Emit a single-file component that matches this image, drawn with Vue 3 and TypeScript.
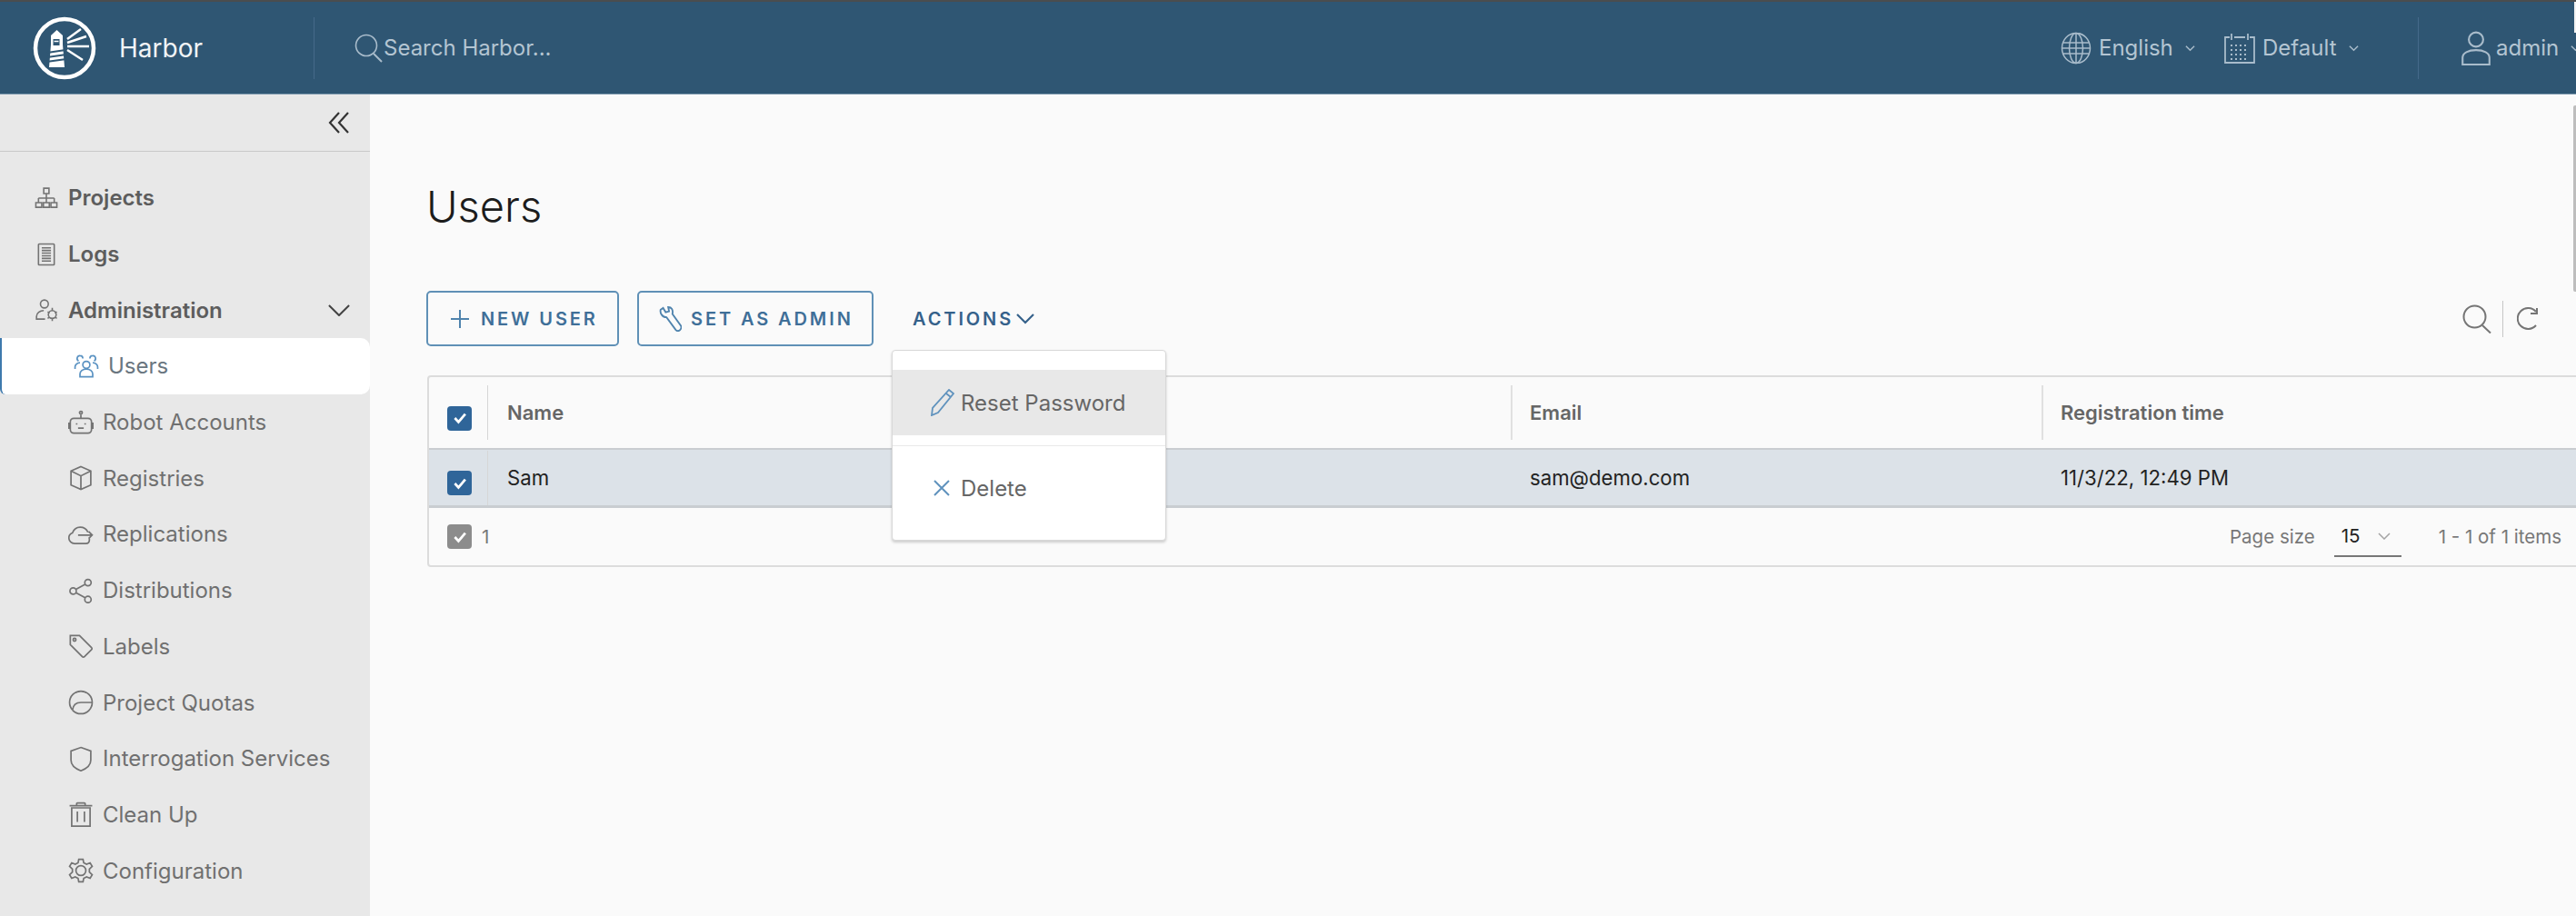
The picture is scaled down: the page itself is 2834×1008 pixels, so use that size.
<script setup lang="ts">
interface NavItem {
  label: string
  icon: string
  top?: boolean
  active?: boolean
  chevron?: boolean
}

const icons: Record<string, string> = {
  projects:
    'M14 3h8v8h-8z M18 11v7 M6 18h24 M6 18v7 M30 18v7 M18 18v7 M2 25h9v7H2z M13.500 25h9v7h-9z M25 25h9v7h-9z',
  logs: 'M7 2h22a1 1 0 0 1 1 1v30a1 1 0 0 1-1 1H7a1 1 0 0 1-1-1V3a1 1 0 0 1 1-1z M11 8h14 M11 12h14 M11 16h14 M11 20h14 M11 24h14 M11 28h14',
  admin:
    'M15 3a6 6 0 1 1 0 12 6 6 0 0 1 0-12z M14 19C8 19 3 23 3 28v4h13 M27 19a6 6 0 1 1 0 12 6 6 0 0 1 0-12z M27 15v4 M27 31v4 M20 21l3 2 M31 29l3 2 M34 21l-3 2 M23 29l-3 2',
  users:
    'M18 11a5 5 0 1 1 0 10 5 5 0 0 1 0-10z M9 33v-4c0-4 4-7 9-7s9 3 9 7v4z M9 3a4 4 0 0 1 4 4 M9 3a4 4 0 0 0-2 7.500 M27 3a4 4 0 0 0-4 4 M27 3a4 4 0 0 1 2 7.500 M2 22v-3c0-3 3-6 7-6 M34 22v-3c0-3-3-6-7-6',
  robot:
    'M8 12h20a5 5 0 0 1 5 5v11a5 5 0 0 1-5 5H8a5 5 0 0 1-5-5V17a5 5 0 0 1 5-5z M18 12V6 M18 2a2 2 0 1 1 0 4 2 2 0 0 1 0-4z M3 19H1v7h2 M33 19h2v7h-2 M12 19v2 M24 19v2 M14 26h8',
  box: 'M18 2l14 6v20l-14 6-14-6V8z M4 8l14 7 14-7 M18 15v19',
  cloud:
    'M30 24v2c0 3-2 5-5 5H9c-4 0-8-3-8-8 0-3 2-6 5-7 2-5 6-8 11-8 5 0 9 3 11 7 M14 19h20 M29 14l5 5-5 5',
  share:
    'M28 2a4 4 0 1 1 0 9 4 4 0 0 1 0-9z M7 14a4 4 0 1 1 0 9 4 4 0 0 1 0-9z M28 26a4 4 0 1 1 0 9 4 4 0 0 1 0-9z M11 16l13-7 M11 21l13 7',
  tag: 'M3 3h13l17 17a2 2 0 0 1 0 3L23 33a2 2 0 0 1-3 0L3 16z M9 7a2 2 0 1 1 0 4 2 2 0 0 1 0-4z',
  quota:
    'M18 2a16 16 0 1 1 0 32 16 16 0 0 1 0-32z M6 29c1-8 6-11 12-11h16',
  shield: 'M18 2l14 5v13c0 7-6 12-14 15C10 32 4 27 4 20V7z',
  trash:
    'M5 9h26v26H5z M2 6h32 M12 6V3a1 1 0 0 1 1-1h10a1 1 0 0 1 1 1v3 M13 14v15 M23 14v15',
  gear: 'M18 11a7 7 0 1 1 0 14 7 7 0 0 1 0-14z M15 2h6l1 5 4 2 5-2 3 5-4 4v4l4 4-3 5-5-2-4 2-1 5h-6l-1-5-4-2-5 2-3-5 4-4v-4l-4-4 3-5 5 2 4-2z',
}

const topItems: NavItem[] = [
  { label: 'Projects', icon: 'projects', top: true },
  { label: 'Logs', icon: 'logs', top: true },
  { label: 'Administration', icon: 'admin', top: true, chevron: true },
]

const subItems: NavItem[] = [
  { label: 'Users', icon: 'users', active: true },
  { label: 'Robot Accounts', icon: 'robot' },
  { label: 'Registries', icon: 'box' },
  { label: 'Replications', icon: 'cloud' },
  { label: 'Distributions', icon: 'share' },
  { label: 'Labels', icon: 'tag' },
  { label: 'Project Quotas', icon: 'quota' },
  { label: 'Interrogation Services', icon: 'shield' },
  { label: 'Clean Up', icon: 'trash' },
  { label: 'Configuration', icon: 'gear' },
]

const navItems: NavItem[] = [...topItems, ...subItems]
</script>

<template>
  <div class="app">
    <header class="topbar">
      <div class="brand">
        <svg class="logo" viewBox="0 0 70 70">
          <circle cx="35" cy="35" r="32" fill="none" stroke="#fff" stroke-width="4.500" />
          <path d="M26.500 15l6.500 6v10l2 25-17 0 2-25v-10z" fill="#fff" />
          <path d="M22.500 25h7v7h-7z" fill="#2f5673" />
          <path d="M23.500 27.500h5" stroke="#fff" stroke-width="1.500" />
          <path d="M16 40l20-3M16 45l21-3M15 50l22-3" stroke="#2f5673" stroke-width="1.800" />
          <path d="M38 25l15-11M38 29l21-7M38 33h24M38 37l17 11" stroke="#fff" stroke-width="2.500" fill="none" />
        </svg>
        <span class="brand-name">Harbor</span>
      </div>
      <div class="search">
        <svg class="search-icon" viewBox="0 0 32 32">
          <circle cx="13" cy="13" r="11.500" fill="none" stroke="#a9bccb" stroke-width="1.600" />
          <path d="M21 22l9 9" stroke="#a9bccb" stroke-width="2" />
        </svg>
        <span>Search Harbor...</span>
      </div>
      <div class="top-right">
        <div class="top-item lang">
          <svg class="t-icon" viewBox="0 0 34 36">
            <g fill="none" stroke="#a9bccb" stroke-width="1.500">
              <ellipse cx="17" cy="18" rx="15.500" ry="16.500" />
              <ellipse cx="17" cy="18" rx="7.500" ry="16.500" />
              <path d="M17 2v32M2 12h30M2 24h30M1.500 18h31" />
            </g>
          </svg>
          <span>English</span>
          <svg class="t-chev" viewBox="0 0 12 8"><path d="M1 1.500l5 5 5-5" /></svg>
        </div>
        <div class="top-item theme">
          <svg class="t-icon" viewBox="0 0 34 36">
            <g fill="none" stroke="#a9bccb" stroke-width="1.800">
              <path d="M6 6H1v28h32V6h-5M11 6h12M8 2v7M26 2v7" />
              <path d="M7 15h20M7 20h20M7 25h20M7 30h20" stroke-dasharray="2 3" stroke-width="2" />
            </g>
          </svg>
          <span>Default</span>
          <svg class="t-chev" viewBox="0 0 12 8"><path d="M1 1.500l5 5 5-5" /></svg>
        </div>
        <div class="top-divider"></div>
        <div class="top-item user">
          <svg class="u-icon" viewBox="0 0 32 36">
            <g fill="none" stroke="#a9bccb" stroke-width="2">
              <circle cx="16" cy="9" r="7.500" />
              <path d="M2 35v-7c0-5 6-8 14-8s14 3 14 8v7z" />
            </g>
          </svg>
          <span>admin</span>
          <svg class="t-chev" viewBox="0 0 12 8"><path d="M1 1.500l5 5 5-5" /></svg>
        </div>
      </div>
      <div class="corner-sliver"></div>
    </header>

    <div class="body">
      <aside class="sidebar">
        <div class="collapse">
          <svg viewBox="0 0 24 24"><path d="M12 1L2 12l10 11M22 1L12 12l10 11" /></svg>
        </div>
        <nav class="nav">
          <a
            v-for="item in navItems"
            :key="item.label"
            class="nav-item"
            :class="{ top: item.top, sub: !item.top, active: item.active }"
          >
            <svg class="nav-icon" viewBox="0 0 36 36"><path :d="icons[item.icon]" /></svg>
            <span>{{ item.label }}</span>
            <svg v-if="item.chevron" class="nav-chev" viewBox="0 0 26 14"><path d="M1 1l12 12L25 1" /></svg>
          </a>
        </nav>
      </aside>

      <main class="main">
        <h1 class="title">Users</h1>
        <div class="toolbar">
          <button class="btn btn-new">
            <svg class="b-icon" viewBox="0 0 20 20"><path d="M10 0v20M0 10h20" /></svg>
            NEW USER
          </button>
          <button class="btn btn-admin">
            <svg class="w-icon" viewBox="0 0 28 30">
              <path d="M6 2l3 5 4-1-1-5c4 0 6 3 5 8l10 14c1 2 0 4-1 5s-3 2-5 0L10 13C5 13 2 8 3 4z" />
            </svg>
            SET AS ADMIN
          </button>
          <div class="actions">
            ACTIONS
            <svg viewBox="0 0 20 12"><path d="M1 1l9 9 9-9" /></svg>
          </div>
          <div class="tools">
            <svg class="tool-search" viewBox="0 0 32 32">
              <circle cx="13.500" cy="13.500" r="12" />
              <path d="M22 23l9 8.500" />
            </svg>
            <span class="tool-divider"></span>
            <svg class="tool-refresh" viewBox="0 0 26 26">
              <path d="M21 20a11.500 11.500 0 1 1 0-15M22 1v6h-7" />
            </svg>
          </div>

          <div class="menu">
            <div class="menu-item hover">
              <svg class="m-pencil" viewBox="0 0 26 30">
                <path d="M20 1l5 4L8 26l-7 3 1-8z M17 5l5 4" />
              </svg>
              Reset Password
            </div>
            <div class="menu-sep"></div>
            <div class="menu-item">
              <svg class="m-x" viewBox="0 0 18 18"><path d="M1 1l16 16M17 1L1 17" /></svg>
              Delete
            </div>
          </div>
        </div>

        <div class="table">
          <div class="row head">
            <div class="cell check">
              <span class="cb"><svg viewBox="0 0 16 16"><path d="M3.500 8l3.200 3.500 6-7" /></svg></span>
            </div>
            <div class="cell sep">Name</div>
            <div class="cell sep">Email</div>
            <div class="cell sep">Registration time</div>
          </div>
          <div class="row data">
            <div class="cell check">
              <span class="cb"><svg viewBox="0 0 16 16"><path d="M3.500 8l3.200 3.500 6-7" /></svg></span>
            </div>
            <div class="cell">Sam</div>
            <div class="cell">sam@demo.com</div>
            <div class="cell">11/3/22, 12:49 PM</div>
          </div>
          <div class="foot">
            <div class="foot-left">
              <span class="cb grey"><svg viewBox="0 0 16 16"><path d="M3.500 8l3.200 3.500 6-7" /></svg></span>
              <span class="count">1</span>
            </div>
            <div class="foot-right">
              <span>Page size</span>
              <span class="select">
                <span>15</span>
                <svg viewBox="0 0 14 8"><path d="M1 1l6 6 6-6" /></svg>
              </span>
              <span>1 - 1 of 1 items</span>
            </div>
          </div>
        </div>
        <div class="scrollbar"></div>
      </main>
    </div>
  </div>
</template>

<style>
html,
body {
  margin: 0;
  overflow: hidden;
  background: #fafafa;
}
</style>

<style scoped>
.app {
  width: 2834px;
  height: 1008px;
  display: flex;
  flex-direction: column;
  overflow: hidden;
  font-family: Inter, 'Liberation Sans', sans-serif;
  color: #555;
}

/* top bar */
.topbar {
  position: relative;
  height: 104px;
  box-sizing: border-box;
  flex: none;
  display: flex;
  align-items: center;
  background: #2f5673;
  border-top: 2px solid #4a4d4f;
  border-bottom: 1px solid #7d99ad;
  color: #b4c5d2;
}
.brand {
  width: 346px;
  height: 68px;
  box-sizing: border-box;
  display: flex;
  align-items: center;
  padding-left: 36px;
  border-right: 1px solid #45698a;
}
.logo {
  width: 70px;
  height: 70px;
}
.brand-name {
  margin-left: 25px;
  font-size: 28px;
  color: #f1f4f6;
}
.search {
  display: flex;
  align-items: center;
  margin-left: 44px;
  font-size: 24px;
  color: #b4c5d2;
}
.search-icon {
  width: 32px;
  height: 32px;
}
.top-right {
  margin-left: auto;
  display: flex;
  align-items: center;
  height: 68px;
  padding-right: 0;
}
.top-item {
  display: flex;
  align-items: center;
  font-size: 24px;
}
.lang {
  width: 180px;
}
.theme {
  width: 213px;
}
.user {
  width: 127px;
  margin-left: 46px;
  margin-right: 0;
  flex: none;
}
.t-icon {
  width: 34px;
  height: 36px;
  margin-right: 8px;
}
.u-icon {
  width: 34px;
  height: 38px;
  margin-right: 5px;
  flex: none;
}
.t-chev {
  width: 11px;
  height: 8px;
  margin-left: 13px;
  flex: none;
}
.t-chev path {
  fill: none;
  stroke: #a9bccb;
  stroke-width: 1.600;
}
.top-divider {
  width: 1px;
  height: 68px;
  background: #45698a;
}
.corner-sliver {
  position: absolute;
  top: 0;
  right: 0;
  width: 2px;
  height: 34px;
  background: #f2f2f2;
}

/* body */
.body {
  flex: 1;
  display: flex;
  min-height: 0;
}
.sidebar {
  width: 407px;
  flex: none;
  background: #e8e8e8;
}
.collapse {
  height: 62px;
  display: flex;
  align-items: center;
  justify-content: flex-end;
  padding-right: 22px;
  border-bottom: 1px solid #c9c9c9;
}
.collapse svg {
  width: 24px;
  height: 24px;
}
.collapse path {
  fill: none;
  stroke: #333;
  stroke-width: 2.200;
}
.nav {
  padding-top: 20px;
  display: flex;
  flex-direction: column;
}
.nav-item {
  height: 61.700px;
  box-sizing: border-box;
  display: flex;
  align-items: center;
  font-size: 24px;
}
.nav-item.top {
  padding-left: 38px;
  font-weight: 600;
  color: #5d5d5d;
}
.nav-item.top .nav-icon {
  width: 26px;
  height: 26px;
  margin-right: 11px;
}
.nav-item.sub {
  padding-left: 75px;
  color: #707070;
}
.nav-item.sub .nav-icon {
  width: 28px;
  height: 28px;
  margin-right: 10px;
}
.nav-icon path {
  fill: none;
  stroke: #737373;
  stroke-width: 2.200;
}
.nav-item.active {
  background: #fff;
  border-left: 2px solid #3e79ad;
  border-radius: 0 10px 10px 6px;
  padding-left: 79px;
  color: #6a7680;
}
.nav-item.active .nav-icon {
  margin-right: 10px;
}
.nav-item.active .nav-icon path {
  stroke: #5a92c2;
}
.nav-chev {
  width: 24px;
  height: 13px;
  margin-left: auto;
  margin-right: 22px;
}
.nav-chev path {
  fill: none;
  stroke: #444;
  stroke-width: 2.200;
}

/* main */
.main {
  position: relative;
  flex: 1;
  min-width: 0;
  padding: 93px 0 0 62px;
  background: #fafafa;
  overflow: hidden;
}
.title {
  margin: 0;
  font-size: 47px;
  line-height: 60px;
  font-weight: 300;
  color: #1c1c1c;
}
.toolbar {
  position: relative;
  margin-top: 63px;
  height: 61px;
  display: flex;
  align-items: stretch;
}
.btn {
  box-sizing: border-box;
  height: 61px;
  display: flex;
  align-items: center;
  background: transparent;
  border: 2px solid #5f90b6;
  border-radius: 5px;
  font-family: inherit;
  font-size: 20px;
  font-weight: 600;
  letter-spacing: 2.900px;
  color: #3f6f98;
  white-space: nowrap;
  padding: 0;
}
.btn-new {
  width: 212px;
  padding-left: 25px;
}
.btn-admin {
  width: 260px;
  margin-left: 20px;
  padding-left: 21px;
}
.b-icon {
  width: 20px;
  height: 20px;
  margin-right: 13px;
}
.b-icon path {
  stroke: #4f83ad;
  stroke-width: 2;
  fill: none;
}
.w-icon {
  width: 26px;
  height: 28px;
  margin-right: 10px;
}
.w-icon path {
  fill: none;
  stroke: #4f83ad;
  stroke-width: 2;
}
.actions {
  margin-left: 43px;
  display: flex;
  align-items: center;
  font-size: 20px;
  font-weight: 600;
  letter-spacing: 2.900px;
  color: #35618a;
}
.actions svg {
  width: 20px;
  height: 12px;
  margin-left: 3px;
}
.actions path {
  fill: none;
  stroke: #35618a;
  stroke-width: 2.200;
}
.tools {
  margin-left: auto;
  display: flex;
  align-items: center;
  padding-right: 39px;
}
.tools svg path,
.tools svg circle {
  fill: none;
  stroke: #757575;
  stroke-width: 2;
}
.tool-search {
  width: 32px;
  height: 32px;
}
.tool-divider {
  width: 1px;
  height: 40px;
  margin: 0 15px 0 12px;
  background: #c6c6c6;
}
.tool-refresh {
  width: 26px;
  height: 26px;
}

/* dropdown */
.menu {
  position: absolute;
  z-index: 5;
  top: 65px;
  left: 512px;
  width: 302px;
  height: 210px;
  box-sizing: border-box;
  padding-top: 21px;
  background: #fff;
  border: 1px solid #d8d8d8;
  border-radius: 4px;
  box-shadow: 0 2px 3px rgba(0, 0, 0, 0.18);
}
.menu-item {
  position: relative;
  height: 72px;
  display: flex;
  align-items: center;
  padding-left: 75px;
  font-size: 24px;
  color: #666;
}
.menu-item.hover {
  background: #e8e8e8;
  color: #666;
}
.menu-sep {
  height: 1px;
  margin-top: 11px;
  margin-bottom: 10px;
  background: #e8e8e8;
}
.m-pencil {
  position: absolute;
  left: 42px;
  top: 21px;
  width: 26px;
  height: 30px;
}
.m-pencil path {
  fill: none;
  stroke: #5f92bd;
  stroke-width: 1.800;
}
.m-x {
  position: absolute;
  left: 45px;
  top: 27px;
  width: 18px;
  height: 18px;
}
.m-x path {
  fill: none;
  stroke: #5f92bd;
  stroke-width: 2;
}

/* table */
.table {
  margin-top: 32px;
  margin-left: 1px;
  margin-right: -12px;
  box-sizing: border-box;
  height: 211px;
  border: 2px solid #dcdcdc;
  border-radius: 4px;
}
.row {
  display: grid;
  grid-template-columns: 65px 1125px 584px 1fr;
  align-items: stretch;
}
.head {
  height: 78px;
  align-items: center;
  font-size: 22px;
  font-weight: 600;
  color: #666;
}
.data {
  height: 66px;
  background: #dce2e8;
  border-top: 2px solid #c9cdd1;
  border-bottom: 3px solid #c9cdd1;
  box-sizing: border-box;
  align-items: center;
  font-size: 22.200px;
  color: #222;
}
.cell {
  padding-left: 21px;
  box-sizing: border-box;
  display: flex;
  align-items: center;
}
.cell.check {
  padding-left: 20px;
  position: relative;
  height: 60px;
}
.cell.check .cb {
  margin-top: 12px;
}
.cell.check::after {
  content: '';
  position: absolute;
  right: 0;
  top: 0;
  bottom: 0;
  width: 1px;
  background: #d6d6d6;
}
.cell.sep {
  position: relative;
  height: 60px;
}
.cell.sep:not(:nth-child(2))::before {
  content: '';
  position: absolute;
  left: 0;
  top: 0;
  bottom: 0;
  width: 2px;
  background: #e0e0e0;
}
.cb {
  width: 27px;
  height: 27px;
  flex: none;
  border-radius: 4px;
  background: #2f6599;
  display: flex;
  align-items: center;
  justify-content: center;
}
.cb svg {
  width: 20px;
  height: 20px;
}
.cb path {
  fill: none;
  stroke: #fff;
  stroke-width: 2.200;
}
.cb.grey {
  background: #8c8c8c;
}
.foot {
  height: 63px;
  display: flex;
  align-items: center;
  justify-content: space-between;
  padding-right: 26px;
  font-size: 20.500px;
  color: #777;
}
.foot-left {
  display: flex;
  align-items: center;
  padding-left: 20px;
}
.count {
  margin-left: 11px;
}
.foot-right {
  display: flex;
  align-items: center;
}
.select {
  width: 74px;
  height: 44px;
  box-sizing: border-box;
  margin: 0 41px 0 21px;
  padding-left: 8px;
  display: flex;
  align-items: center;
  justify-content: space-between;
  padding-right: 12px;
  border-bottom: 2px solid #777;
  color: #222;
}
.select svg {
  width: 14px;
  height: 8px;
}
.select path {
  fill: none;
  stroke: #a4a4a4;
  stroke-width: 1.500;
}
.scrollbar {
  position: absolute;
  right: 0;
  top: 12px;
  width: 3px;
  height: 205px;
  background: #bdbdbd;
  border-radius: 2px 0 0 2px;
}
</style>
